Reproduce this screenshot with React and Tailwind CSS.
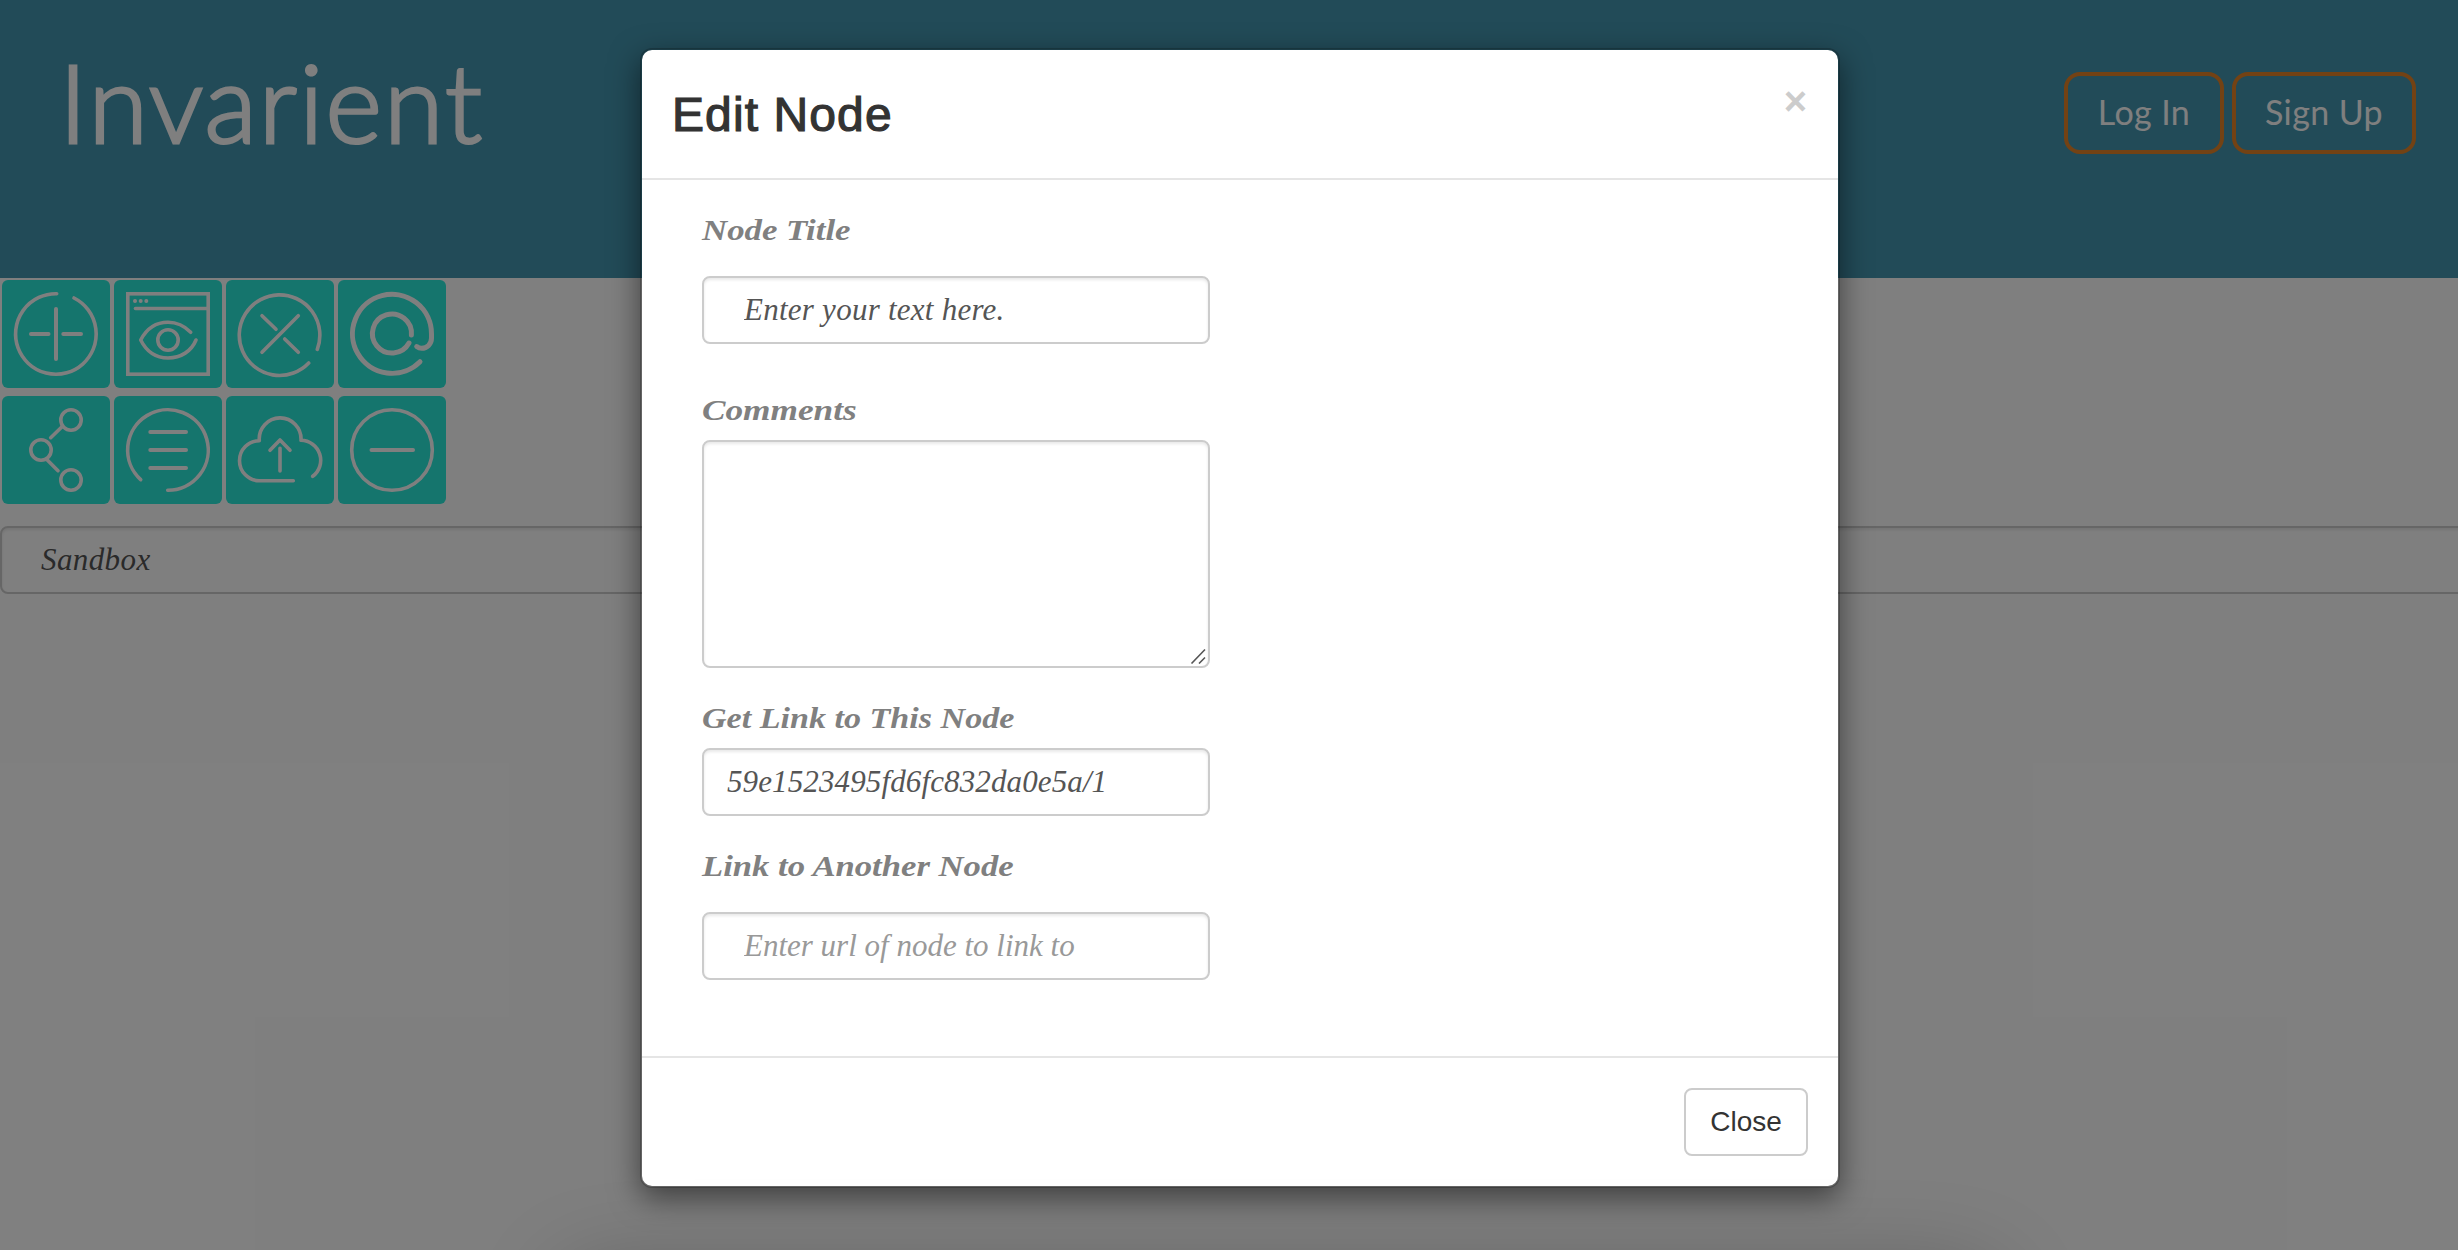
import React from "react";

const stroke = {
  fill: "none",
  stroke: "#ffffff",
  strokeWidth: 3.6,
  strokeLinecap: "round",
  strokeLinejoin: "round",
};

function Tile({ children }) {
  return (
    <button className="block h-[108px] w-[108px] rounded-md bg-[#2aeada]">
      <svg viewBox="0 0 108 108" className="block h-[108px] w-[108px]" {...stroke}>
        {children}
      </svg>
    </button>
  );
}

function Toolbar() {
  return (
    <div className="grid w-max grid-cols-4 gap-x-1 gap-y-2 pt-0.5 pl-0.5">
      <Tile>
        <path d="M72 18A40.3 40.3 0 1 1 54.7 13.7" />
        <path d="M54 29V79M29 54H46.5M61.3 54H79" strokeWidth="4" />
      </Tile>
      <Tile>
        <rect x="13.8" y="13.8" width="80.4" height="80.4" strokeLinejoin="miter" />
        <path d="M21.5 28.5H94" />
        <g fill="#ffffff" stroke="none">
          <circle cx="21" cy="21" r="2" />
          <circle cx="26.7" cy="21" r="2" />
          <circle cx="32.3" cy="21" r="2" />
        </g>
        <path d="M76.7 52.3C71 46.5 63 42.3 54 42.3C42 42.3 32.5 49 26.7 60C32.5 71.5 42 78 54 78C67 78 77.5 71 82 60" />
        <circle cx="54" cy="60" r="10.2" />
      </Tile>
      <Tile>
        <path d="M82.7 83A40.3 40.3 0 1 1 91.3 69.3" />
        <path d="M72.3 35.7L36 72.3M36 35.7L50 49.3M58.7 59L72.3 72.3" />
      </Tile>
      <Tile>
        <g strokeWidth="5">
          <path d="M82 81.7A39.5 39.5 0 1 1 93.5 54V58C93.5 64 89 68.3 83.7 68.3C81.5 68.3 80 67.6 78.7 66.6" />
          <path d="M71 63A19.5 19.5 0 1 1 73.4 55" />
        </g>
      </Tile>
      <Tile>
        <circle cx="69" cy="24" r="10.2" />
        <circle cx="39" cy="54" r="10.2" />
        <circle cx="69" cy="84" r="10.2" />
        <path d="M60 30.7L48.7 41.7M45.3 64L56 74.7" />
      </Tile>
      <Tile>
        <path d="M53.7 94.3A40.3 40.3 0 1 0 26.7 83.7" />
        <path d="M36.3 36H72M36.3 54H72M36.3 72H72" strokeWidth="4" />
      </Tile>
      <Tile>
        <path d="M67.3 84.7H33.3A19.8 20 0 1 1 33.3 44.7A20.9 21.2 0 1 1 75 44.3A20 20 0 0 1 86.7 80.3" />
        <path d="M54 52.3V75M44 54.3L54 44L64 54.3" />
      </Tile>
      <Tile>
        <circle cx="54" cy="54" r="40.3" />
        <path d="M33.5 54H75" strokeWidth="4" />
      </Tile>
    </div>
  );
}

function Header() {
  return (
    <header className="flex h-[278px] items-start justify-between bg-[#4496b0] pr-[42px] pl-[59px] text-white">
      <h1 className="mt-[38px] font-['Lato',sans-serif] text-[108px] leading-[127px] font-light tracking-[2.2px] [-webkit-text-stroke:3px_#ffffff]">
        Invarient
      </h1>
      <nav className="mt-[72px] flex gap-2 font-['Lato',sans-serif] text-[34px] tracking-[0.4px]">
        <button className="h-[82px] w-[160px] rounded-2xl border-4 border-[#e68428] pb-[3px]">Log In</button>
        <button className="h-[82px] w-[184px] rounded-2xl border-4 border-[#e68428] pb-[3px]">Sign Up</button>
      </nav>
    </header>
  );
}

function Label({ children, className }) {
  return (
    <div className="h-10 leading-10">
      <label
        className={`inline-block origin-left font-['Liberation_Serif',serif] text-[29px] font-bold whitespace-nowrap text-[#808080] italic ${className}`}
      >
        {children}
      </label>
    </div>
  );
}

const field =
  "rounded-lg border-2 border-[#cccccc] bg-white shadow-[inset_0_2px_3px_rgba(0,0,0,0.09)] font-['Liberation_Serif',serif] text-[31px] italic";

function Modal() {
  return (
    <section className="h-[1140px] w-[1200px] rounded-xl border-2 border-black/20 bg-white bg-clip-padding shadow-[0_10px_30px_rgba(0,0,0,0.5)]">
      <div className="flex h-[130px] items-start justify-between border-b-2 border-[#e5e5e5] pr-[31px] pl-[30px]">
        <h2 className="mt-[31px] font-['Liberation_Sans',sans-serif] text-[48px] leading-[68px] tracking-[1.1px] text-[#333333] [-webkit-text-stroke:1.2px_#333333]">
          Edit Node
        </h2>
        <button className="mt-[31px] h-10 font-['Liberation_Sans',sans-serif] text-[40px] leading-10 font-bold text-[#cccccc]">
          ×
        </button>
      </div>

      <form className="flex h-[876px] w-[568px] flex-col pt-[30px] pl-[60px]">
        <Label className="scale-x-[1.2]">Node Title</Label>
        <input
          className={`${field} mt-[26px] h-[68px] shrink-0 px-10 tracking-[0.25px] text-[#555555]`}
          defaultValue="Enter your text here."
        />
        <div className="h-[46px]" />
        <Label className="scale-x-[1.215]">Comments</Label>
        <div className={`${field} relative mt-2.5 h-[228px] shrink-0`}>
          <svg viewBox="0 0 16 16" className="absolute right-0.5 bottom-0.5 h-4 w-4" fill="none" stroke="#555555" strokeWidth="1.6">
            <path d="M1.5 15.5L15 1.5M9 15.5L15 9.5" />
          </svg>
        </div>
        <div className="h-[30px]" />
        <Label className="scale-x-[1.175]">Get Link to This Node</Label>
        <input
          className={`${field} mt-2.5 h-[68px] shrink-0 pr-6 pl-[23px] tracking-[0.12px] text-[#555555]`}
          defaultValue="59e1523495fd6fc832da0e5a/1"
        />
        <div className="h-[30px]" />
        <Label className="scale-x-[1.195]">Link to Another Node</Label>
        <input
          className={`${field} mt-[26px] h-[68px] shrink-0 px-10 placeholder:text-[#999999] placeholder:opacity-100`}
          placeholder="Enter url of node to link to"
        />
      </form>

      <div className="flex h-[130px] justify-end border-t-2 border-[#e5e5e5] pt-[30px] pr-[30px]">
        <button className="h-[68px] w-[124px] rounded-lg border-2 border-[#cccccc] bg-white font-['Liberation_Sans',sans-serif] text-[28px] text-[#333333]">
          Close
        </button>
      </div>
    </section>
  );
}

export default function App() {
  return (
    <div className="relative h-[1250px] w-full overflow-hidden bg-white">
      <Header />
      <Toolbar />
      <input
        className="mt-[22px] block h-[68px] w-[2500px] rounded-lg border-2 border-[#cccccc] bg-white pl-[39px] font-['Liberation_Serif',serif] text-[31px] tracking-[0.4px] text-[#555555] italic shadow-[inset_0_2px_3px_rgba(0,0,0,0.09)]"
        defaultValue="Sandbox"
      />
      <div className="absolute inset-0 flex items-start bg-black/50 pt-12 pl-[640px]">
        <Modal />
      </div>
      {/* soft shadow rising from the lower edge of the window */}
      <div className="pointer-events-none absolute top-[1270px] left-[560px] h-40 w-[1440px] rounded-[40px] shadow-[0_0_90px_rgba(0,0,0,0.24)]" />
    </div>
  );
}
